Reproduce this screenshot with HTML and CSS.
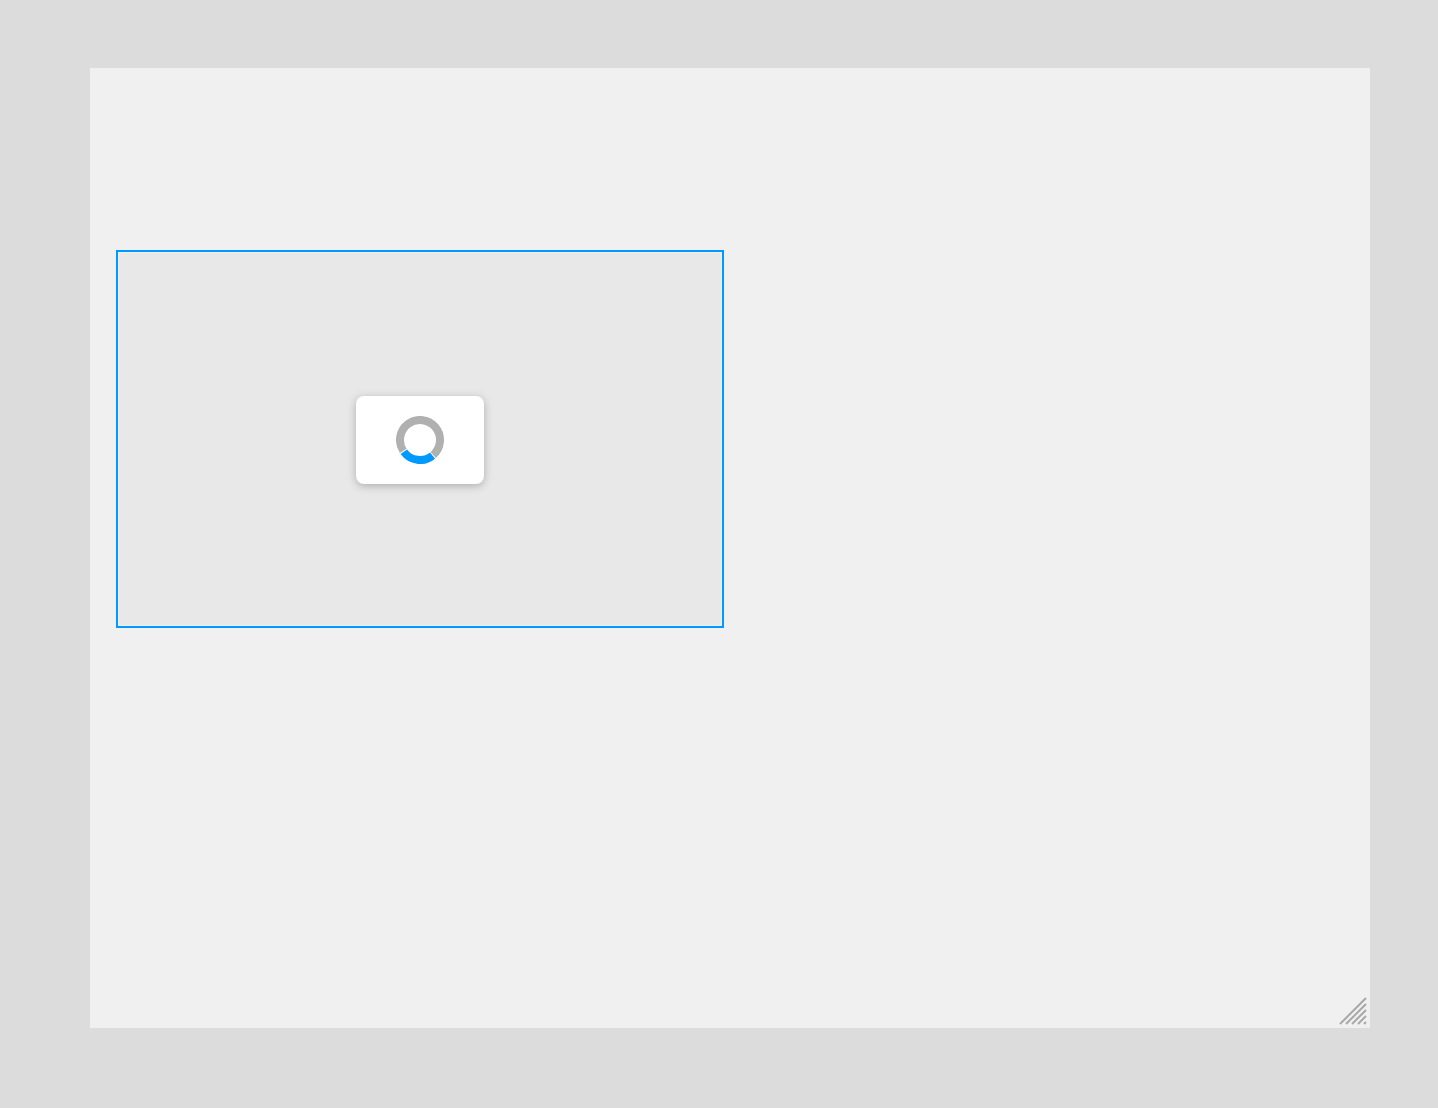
FILE: index.html
```html
<!DOCTYPE html>
<html lang="en">
<head>
<meta charset="utf-8">
<title>Loading</title>
<link rel="stylesheet" href="styles.css">
</head>
<body>
<main class="canvas">
  <section class="frame">
    <div class="loader">
      <svg class="spinner" width="48" height="48" viewBox="0 0 48 48" fill="none">
        <path class="track" d="M7.23 34.89A20 20 0 1 1 37.25 38.98"/>
        <path class="arc" d="M7.82 35.76A20 20 0 0 0 36.59 39.54"/>
      </svg>
    </div>
  </section>
  <svg class="grip" width="30" height="30" viewBox="0 0 30 30" fill="none">
    <path d="M2 28L28 2M8 28L28 8M14 28L28 14M20 28L28 20M26 28L28 26"/>
  </svg>
</main>
</body>
</html>
```
FILE: styles.css
```css
html, body {
  margin: 0;
  height: 100%;
}
body {
  background: #dcdcdc;
  padding: 68px 68px 0 90px;
  box-sizing: border-box;
  overflow: hidden;
}
.canvas {
  position: relative;
  width: 1280px;
  height: 960px;
  background: #f0f0f0;
  padding: 182px 0 0 26px;
  box-sizing: border-box;
}
.frame {
  width: 608px;
  height: 378px;
  box-sizing: border-box;
  border: 2px solid #0099ff;
  padding-top: 2px;
  background: #e8e8e8;
  box-shadow: inset 0 0 0 1px #f0f0f0;
  display: flex;
  align-items: center;
  justify-content: center;
}
.loader {
  width: 128px;
  height: 88px;
  background: #fff;
  border-radius: 8px;
  box-shadow: 0 2px 8px rgba(0, 0, 0, 0.25);
  display: flex;
  align-items: center;
  justify-content: center;
}
.spinner { display: block; }
.track { stroke: #b0b0b0; stroke-width: 8; }
.arc { stroke: #0099ff; stroke-width: 8; }
.grip {
  position: absolute;
  right: 2px;
  bottom: 2px;
}
.grip path { stroke: #a8a8a8; stroke-width: 2; }
```
